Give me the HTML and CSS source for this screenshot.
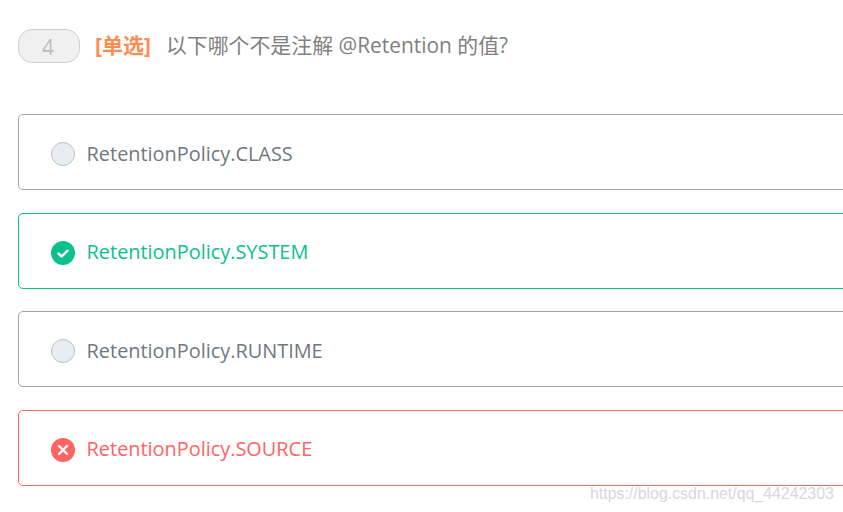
FILE: index.html
```html
<!doctype html>
<html lang="en">
<head>
	<meta charset="UTF-8">
	<title>单选题</title>
	<link rel="stylesheet" href="styles.css">
</head>
<body>
	<div class="wrap">
		<div class="question">
			<span class="num">4</span>
			<span class="type">[单选]</span>
			<span class="title">以下哪个不是注解 @Retention 的值?</span>
		</div>
		<div class="options">
			<div class="option">
				<span class="radio"></span>
				<span class="label">RetentionPolicy.CLASS</span>
			</div>
			<div class="option right">
				<svg class="icon" viewBox="0 0 24 24"><circle cx="12" cy="12" r="12" fill="#0cc08d"/><path d="M7.5 12.5l3.2 3 5.8-5.8" fill="none" stroke="#fff" stroke-width="2.4" stroke-linecap="round" stroke-linejoin="round"/></svg>
				<span class="label">RetentionPolicy.SYSTEM</span>
			</div>
			<div class="option">
				<span class="radio"></span>
				<span class="label">RetentionPolicy.RUNTIME</span>
			</div>
			<div class="option wrong">
				<svg class="icon" viewBox="0 0 24 24"><circle cx="12" cy="12" r="12" fill="#ff6363"/><path d="M8 8l8 8M16 8l-8 8" fill="none" stroke="#fff" stroke-width="2.4" stroke-linecap="round"/></svg>
				<span class="label">RetentionPolicy.SOURCE</span>
			</div>
		</div>
	</div>
	<div class="watermark">https://blog.csdn.net/qq_44242303</div>
</body>
</html>
```

FILE: styles.css
```css
*{
	margin:0;
	padding:0;
	box-sizing:border-box;
}
html, body{
	height:100%;
	overflow:hidden;
	background:#fff;
}
body{
	position:relative;
	font-family:"Open Sans", "Noto Sans CJK SC", sans-serif;
}
.wrap{
	padding:29px 0 0 18px;
}
.question{
	display:flex;
	align-items:center;
	height:34px;
	margin-bottom:51px;
}
.num{
	width:62px;
	height:34px;
	padding-right:2px;
	line-height:34px;
	text-align:center;
	font-size:21px;
	color:#bdbdc4;
	background:#f0f0f1;
	border:1px solid #cfcfcf;
	border-radius:14px;
}
.type{
	margin:0 0 4px 15px;
	font-size:21px;
	font-weight:bold;
	color:#ff8c51;
}
.title{
	margin:0 0 4px 15px;
	font-size:20.9px;
	color:#808080;
}
.options{
	display:flex;
	flex-direction:column;
	gap:22.5px;
	margin-right:-10px;
}
.option{
	display:flex;
	align-items:center;
	height:76px;
	padding:4px 0 0 32px;
	border:1px solid #a3a3a3;
	border-radius:5px;
	color:#6f7882;
}
.radio{
	width:24px;
	height:24px;
	background:#e8edf1;
	border:1px solid #b9c1c9;
	border-radius:50%;
}
.icon{
	width:24px;
	height:24px;
}
.label{
	margin:0 0 2px 11.6px;
	font-size:19.9px;
}
.right{
	border-color:#0cc08d;
	color:#0cc08d;
}
.wrong{
	border-color:#ff6363;
	color:#ff6363;
}
.watermark{
	position:absolute;
	left:590px;
	top:485px;
	font-family:"Liberation Sans", sans-serif;
	font-size:15.9px;
	color:#d8d8d8;
}
```
